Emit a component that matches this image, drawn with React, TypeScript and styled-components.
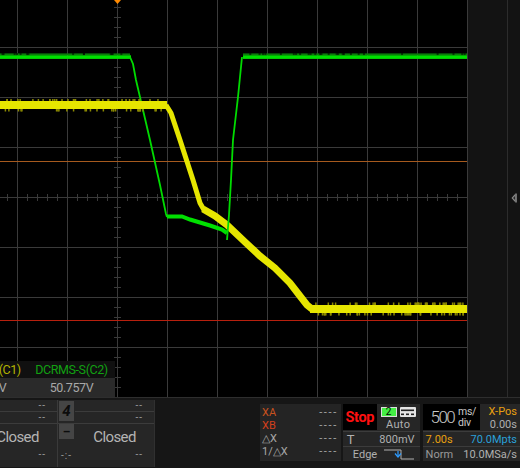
import styled, { createGlobalStyle } from 'styled-components';

const GlobalStyle = createGlobalStyle`
  html, body {
    margin: 0;
    padding: 0;
    background: #000;
  }
  body {
    font-family: Roboto, "Liberation Sans", sans-serif;
  }
`;

/** trace noise, deterministic so every shot looks the same */
const makeNoise = (seed: number, count: number, from: number, to: number) => {
  let s = seed;
  const out: number[] = [];
  for (let i = 0; i < count; i++) {
    s = (s * 9301 + 49297) % 233280;
    out.push(from + (s / 233280) * (to - from));
  }
  return out;
};

const gridX = [17, 67, 117, 167, 217, 267, 317, 367, 417];
const gridY = [47, 97, 147, 197, 247, 297, 347];

const Scope = () => {
  const ticksY: number[] = [];
  for (let y = 7; y < 397; y += 10) if (!gridY.includes(y)) ticksY.push(y);
  const ticksX: number[] = [];
  for (let x = 7; x < 467; x += 10) if (!gridX.includes(x)) ticksX.push(x);

  const yNoiseTop = makeNoise(11, 34, 0, 165);
  const yNoiseBot = makeNoise(23, 30, 0, 165);
  const yNoiseTop2 = makeNoise(37, 40, 312, 465);
  const yNoiseBot2 = makeNoise(51, 40, 312, 465);
  const gGaps = makeNoise(71, 40, 0, 465);

  return (
    <svg width="467" height="397" viewBox="0 0 467 397">
      {gridX.map((x) => (
        <line key={'vx' + x} x1={x + 0.5} y1="0" x2={x + 0.5} y2="397" stroke="#3a3a3a" />
      ))}
      {gridY.map((y) => (
        <line key={'hy' + y} x1="0" y1={y + 0.5} x2="467" y2={y + 0.5} stroke="#3a3a3a" />
      ))}
      {ticksY.map((y) => (
        <line key={'ty' + y} x1="114" y1={y + 0.5} x2="121" y2={y + 0.5} stroke="#3a3a3a" />
      ))}
      {ticksX.map((x) => (
        <line key={'tx' + x} x1={x + 0.5} y1="194" x2={x + 0.5} y2="201" stroke="#3a3a3a" />
      ))}

      <line x1="0" y1="161.5" x2="467" y2="161.5" stroke="#a65a1e" />
      <line x1="0" y1="320.5" x2="467" y2="320.5" stroke="#b8200e" />
      <polygon points="114,0 121,0 117.5,4" fill="#ff8a00" />

      {/* C2 green */}
      <rect x="0" y="53.4" width="130" height="2" fill="#0d7d0d" />
      <rect x="243" y="53.4" width="224" height="2" fill="#0d7d0d" />
      {gGaps.map((x, i) => (
        <rect key={'gg' + i} x={x < 130 || x > 243 ? x : x + 130} y="53" width="2" height="2.6" fill="#000" opacity="0.55" />
      ))}
      <rect x="0" y="55.3" width="131" height="3.6" fill="#00e000" />
      <rect x="243" y="55.3" width="224" height="3.6" fill="#00e000" />
      <polyline
        points="130,57 133,64 136,80 150,140 160,185 166,214 167,217"
        fill="none"
        stroke="#00dc00"
        strokeWidth="1.8"
      />
      <polyline
        points="167,216.5 182,216.5 190,219.5 210,225.5 222,229.5 227,233"
        fill="none"
        stroke="#00e000"
        strokeWidth="4"
      />

      {/* C1 yellow */}
      {yNoiseTop.map((x, i) => (
        <rect key={'yt' + i} x={x} y="99" width="1.5" height="2.5" fill="#8c8a00" />
      ))}
      {yNoiseBot.map((x, i) => (
        <rect key={'yb' + i} x={x} y="108.5" width="1.5" height="3" fill="#8c8a00" />
      ))}
      {yNoiseTop2.map((x, i) => (
        <rect key={'yt2' + i} x={x} y="302.5" width="1.5" height="3" fill="#8c8a00" />
      ))}
      {yNoiseBot2.map((x, i) => (
        <rect key={'yb2' + i} x={x} y="312.5" width="1.5" height="3" fill="#8c8a00" />
      ))}
      <rect x="0" y="101" width="167" height="8" fill="#e6e600" />
      <polyline
        points="166,105 171,113 180,140 193,180 200,203 204,210"
        fill="none"
        stroke="#e6e600"
        strokeWidth="5"
      />
      <polyline
        points="203,209 215,216 227,225 245,242 260,256 275,268 290,283 300,296 307,305 312,309"
        fill="none"
        stroke="#e6e600"
        strokeWidth="7"
      />
      <rect x="310" y="305" width="157" height="8" fill="#e6e600" />

      <polyline
        points="227,240 229,215 231,180 233,140 238,97 242,57"
        fill="none"
        stroke="#00dc00"
        strokeWidth="1.8"
      />
    </svg>
  );
};

const App = () => {
  return (
    <>
      <GlobalStyle />
      <StyledScreen>
        <StyledTop>
          <StyledPlot>
            <Scope />
            <StyledMeasureTable>
              <StyledMeasureHead $color="#b4b400">DCRMS-S(C1)</StyledMeasureHead>
              <StyledMeasureHead $color="#12a012">DCRMS-S(C2)</StyledMeasureHead>
              <StyledMeasureValue>50.741V</StyledMeasureValue>
              <StyledMeasureValue>50.757V</StyledMeasureValue>
            </StyledMeasureTable>
          </StyledPlot>
          <StyledSidePanel>
            <StyledSideMain />
            <StyledSideEdge>
              <svg width="6" height="10" viewBox="0 0 6 10">
                <polygon points="4.5,0.5 0.5,5 4.5,9.5" fill="#8a8a8a" />
                <polygon points="4,3 2,5 4,7" fill="#2a2a2a" />
                <rect x="4.5" y="0.5" width="1.2" height="9" fill="#9a9a9a" />
              </svg>
            </StyledSideEdge>
          </StyledSidePanel>
        </StyledTop>

        <StyledBottomBar>
          <StyledCursorGroup>
            <StyledMathPanel $first>
              <StyledMathRow>--</StyledMathRow>
              <StyledMathRow>--</StyledMathRow>
              <StyledMathBig>Closed</StyledMathBig>
              <StyledMathFoot>
                <span />
                <span>--</span>
              </StyledMathFoot>
            </StyledMathPanel>
            <StyledMathPanel>
              <StyledMathSide>
                <StyledMathButton $tall>4</StyledMathButton>
                <StyledMathButton>–</StyledMathButton>
              </StyledMathSide>
              <StyledMathRow $inset>--</StyledMathRow>
              <StyledMathRow>--</StyledMathRow>
              <StyledMathBig>Closed</StyledMathBig>
              <StyledMathFoot>
                <StyledMathTime>-:-</StyledMathTime>
                <span>--</span>
              </StyledMathFoot>
            </StyledMathPanel>
          </StyledCursorGroup>

          <StyledCursorPanel>
            <StyledCursorRow>
              <StyledCursorLabel $color="#c8521e">XA</StyledCursorLabel>
              <span>----</span>
            </StyledCursorRow>
            <StyledCursorRow>
              <StyledCursorLabel $color="#d2401c">XB</StyledCursorLabel>
              <span>----</span>
            </StyledCursorRow>
            <StyledCursorRow>
              <StyledCursorLabel $color="#a8a8a8">△X</StyledCursorLabel>
              <span>----</span>
            </StyledCursorRow>
            <StyledCursorRow>
              <StyledCursorLabel $color="#a8a8a8">1/△X</StyledCursorLabel>
              <span>----</span>
            </StyledCursorRow>
          </StyledCursorPanel>

          <StyledTriggerPanel>
            <StyledTriggerTop>
              <StyledStopBox>Stop</StyledStopBox>
              <StyledTriggerMode>
                <StyledBadgeRow>
                  <StyledChannelBadge>2</StyledChannelBadge>
                  <StyledCouplingBadge>
                    <svg width="13" height="7" viewBox="0 0 13 7">
                      <rect x="0" y="0.5" width="13" height="1.6" fill="#222" />
                      <rect x="0" y="4.5" width="3" height="1.6" fill="#222" />
                      <rect x="5" y="4.5" width="3" height="1.6" fill="#222" />
                      <rect x="10" y="4.5" width="3" height="1.6" fill="#222" />
                    </svg>
                  </StyledCouplingBadge>
                </StyledBadgeRow>
                <StyledModeText>Auto</StyledModeText>
              </StyledTriggerMode>
            </StyledTriggerTop>
            <StyledTriggerRow>
              <StyledTriggerLetter>T</StyledTriggerLetter>
              <span>800mV</span>
            </StyledTriggerRow>
            <StyledTriggerRow>
              <StyledEdgeText>Edge</StyledEdgeText>
              <svg width="30" height="11" viewBox="0 0 30 11">
                <polyline points="0,1 17,1 17,10 30,10" fill="none" stroke="#b0b0b0" strokeWidth="1" />
                <line x1="14" y1="2" x2="14" y2="7.5" stroke="#2f9cff" strokeWidth="1.2" />
                <polyline points="11,4.5 14,8 17,4.5" fill="none" stroke="#2f9cff" strokeWidth="1.2" />
              </svg>
            </StyledTriggerRow>
          </StyledTriggerPanel>

          <StyledTimePanel>
            <StyledTimeTop>
              <StyledScaleBox>
                <StyledScaleValue>500</StyledScaleValue>
                <StyledScaleUnit>
                  <span>ms/</span>
                  <span>div</span>
                </StyledScaleUnit>
              </StyledScaleBox>
              <StyledXPos>
                <StyledTimeText $color="#e8a010">X-Pos</StyledTimeText>
                <StyledTimeText $color="#b0b0b0">0.00s</StyledTimeText>
              </StyledXPos>
            </StyledTimeTop>
            <StyledTimeRow>
              <StyledTimeText $color="#e8a010">7.00s</StyledTimeText>
              <StyledTimeText $color="#2aa0d8">70.0Mpts</StyledTimeText>
            </StyledTimeRow>
            <StyledTimeRow>
              <StyledTimeText $color="#9a9a9a">Norm</StyledTimeText>
              <StyledTimeText $color="#b0b0b0">10.0MSa/s</StyledTimeText>
            </StyledTimeRow>
          </StyledTimePanel>
        </StyledBottomBar>
      </StyledScreen>
    </>
  );
};

export default App;

/** STYLED COMPONENTS  **/

const StyledScreen = styled.div`
  display: flex;
  flex-direction: column;
  width: 520px;
  height: 468px;
  overflow: hidden;
  background: #000;
`;

const StyledTop = styled.div`
  display: flex;
  height: 397px;
  flex-shrink: 0;
`;

const StyledPlot = styled.div`
  position: relative;
  width: 467px;
  height: 397px;
  background: #000;

  svg {
    display: block;
  }
`;

const StyledMeasureTable = styled.div`
  position: absolute;
  left: -59px;
  top: 361px;
  display: grid;
  grid-template-columns: 87px 87px;
  grid-template-rows: 17px 19px;
  font-size: 12.5px;
  letter-spacing: -0.4px;
`;

const StyledMeasureHead = styled.div<{ $color: string }>`
  display: flex;
  align-items: center;
  justify-content: center;
  background: #101010;
  color: ${(p) => p.$color};
  white-space: nowrap;
`;

const StyledMeasureValue = styled.div`
  display: flex;
  align-items: center;
  justify-content: center;
  background: #2a2a2a;
  color: #a8a8a8;
  white-space: nowrap;
`;

const StyledSidePanel = styled.div`
  display: flex;
  flex: 1;
  background: #131313;
  border-left: 1px solid #3a3a3a;
`;

const StyledSideMain = styled.div`
  width: 39px;
`;

const StyledSideEdge = styled.div`
  display: flex;
  flex: 1;
  align-items: center;
  justify-content: center;
  padding-bottom: 1px;
  border-left: 1px solid #2c2c2c;

  svg {
    display: block;
  }
`;

const StyledBottomBar = styled.div`
  display: flex;
  align-items: flex-start;
  flex: 1;
  background: #161616;
  border-top: 1px solid #2e2e2e;
  color: #b0b0b0;
`;

const StyledCursorGroup = styled.div`
  display: flex;
  margin-top: 2px;
  margin-left: -39px;
`;

const StyledMathPanel = styled.div<{ $first?: boolean }>`
  position: relative;
  display: flex;
  flex-direction: column;
  width: 96px;
  height: 67px;
  background: #262626;
  border-right: 1px solid ${(p) => (p.$first ? '#3a3a3a' : '#303030')};
`;

const StyledMathRow = styled.div<{ $inset?: boolean }>`
  display: flex;
  align-items: center;
  justify-content: flex-end;
  height: 11px;
  padding-right: 11px;
  margin-left: ${(p) => (p.$inset ? '17px' : '0')};
  border-bottom: 1px solid #3c3c3c;
  font-size: 10px;
  letter-spacing: 1px;
  color: #9a9a9a;
`;

const StyledMathBig = styled.div`
  display: flex;
  align-items: flex-end;
  justify-content: center;
  height: 22px;
  padding-left: 17px;
  font-size: 15px;
  letter-spacing: -0.6px;
  color: #b4b4b4;
`;

const StyledMathFoot = styled.div`
  display: flex;
  align-items: center;
  justify-content: space-between;
  height: 16px;
  padding: 0 11px 0 3px;
  font-size: 10px;
  letter-spacing: 1px;
  color: #9a9a9a;
`;

const StyledMathTime = styled.span`
  padding-top: 3px;
`;

const StyledMathSide = styled.div`
  position: absolute;
  left: 1px;
  top: 1px;
  display: flex;
  flex-direction: column;
  gap: 3px;
`;

const StyledMathButton = styled.div<{ $tall?: boolean }>`
  display: flex;
  align-items: center;
  justify-content: center;
  width: 15px;
  height: ${(p) => (p.$tall ? '20px' : '15px')};
  background: #454545;
  color: #0c0c0c;
  font-size: ${(p) => (p.$tall ? '15px' : '12px')};
  font-weight: bold;
  font-style: ${(p) => (p.$tall ? 'italic' : 'normal')};
`;

const StyledCursorPanel = styled.div`
  display: flex;
  flex-direction: column;
  width: 77px;
  height: 53px;
  margin-top: 6px;
  margin-left: 105px;
  padding: 2px 3px 2px 2px;
  background: #242424;
  font-size: 11px;
`;

const StyledCursorRow = styled.div`
  display: flex;
  align-items: center;
  justify-content: space-between;
  height: 13px;
  color: #a8a8a8;
  letter-spacing: 1.6px;
`;

const StyledCursorLabel = styled.span<{ $color: string }>`
  color: ${(p) => p.$color};
  letter-spacing: 0;
`;

const StyledTriggerPanel = styled.div`
  display: flex;
  flex-direction: column;
  width: 78px;
  height: 57px;
  margin-top: 6px;
  margin-left: 2px;
  background: #262626;
  font-size: 11px;
`;

const StyledTriggerTop = styled.div`
  display: flex;
  height: 27px;
  border-bottom: 1px solid #3c3c3c;
`;

const StyledStopBox = styled.div`
  display: flex;
  align-items: center;
  justify-content: center;
  width: 34px;
  height: 26px;
  background: #000;
  color: #ff1010;
  font-size: 14.5px;
  font-weight: bold;
  letter-spacing: -0.3px;
`;

const StyledTriggerMode = styled.div`
  display: flex;
  flex: 1;
  flex-direction: column;
  align-items: center;
  padding-top: 3px;
`;

const StyledBadgeRow = styled.div`
  display: flex;
  gap: 3px;
`;

const StyledChannelBadge = styled.div`
  display: flex;
  align-items: center;
  justify-content: center;
  width: 16px;
  height: 10px;
  background: #44ee44;
  border: 1px solid #dcdcdc;
  box-sizing: border-box;
  color: #000;
  font-size: 10px;
  line-height: 1;
`;

const StyledCouplingBadge = styled.div`
  display: flex;
  align-items: center;
  justify-content: center;
  width: 16px;
  height: 10px;
  background: #e4e4e4;
  border-radius: 1px;
`;

const StyledModeText = styled.span`
  margin-top: 1px;
  color: #b0b0b0;
  letter-spacing: 0.3px;
`;

const StyledTriggerRow = styled.div`
  display: flex;
  align-items: center;
  justify-content: space-between;
  height: 14px;
  padding: 0 5px 0 4px;
  border-bottom: 1px solid #3c3c3c;
  color: #b0b0b0;

  &:last-of-type {
    border-bottom: none;
    padding-right: 6px;
  }
`;

const StyledTriggerLetter = styled.span`
  font-size: 13px;
`;

const StyledEdgeText = styled.span`
  padding-left: 6px;
`;

const StyledTimePanel = styled.div`
  display: flex;
  flex-direction: column;
  width: 99px;
  height: 57px;
  margin-top: 6px;
  margin-left: 3px;
  background: #262626;
  font-size: 11px;
`;

const StyledTimeTop = styled.div`
  display: flex;
  height: 27px;
  border-bottom: 1px solid #3c3c3c;
`;

const StyledScaleBox = styled.div`
  display: flex;
  align-items: center;
  gap: 4px;
  width: 57px;
  height: 26px;
  padding-left: 8px;
  box-sizing: border-box;
  background: #000;
  color: #c8c8c8;
`;

const StyledScaleValue = styled.span`
  font-size: 17px;
  letter-spacing: -1.6px;
  font-weight: 300;
`;

const StyledScaleUnit = styled.span`
  display: flex;
  flex-direction: column;
  font-size: 10.5px;
  line-height: 11px;
  letter-spacing: -0.3px;
`;

const StyledXPos = styled.div`
  display: flex;
  flex: 1;
  flex-direction: column;
  align-items: flex-end;
  justify-content: center;
  padding-right: 3px;
  line-height: 13px;
`;

const StyledTimeRow = styled.div`
  display: flex;
  align-items: center;
  justify-content: space-between;
  height: 14px;
  padding: 0 3px;
  border-bottom: 1px solid #3c3c3c;

  &:last-of-type {
    border-bottom: none;
  }
`;

const StyledTimeText = styled.span<{ $color: string }>`
  color: ${(p) => p.$color};
  white-space: nowrap;
`;
